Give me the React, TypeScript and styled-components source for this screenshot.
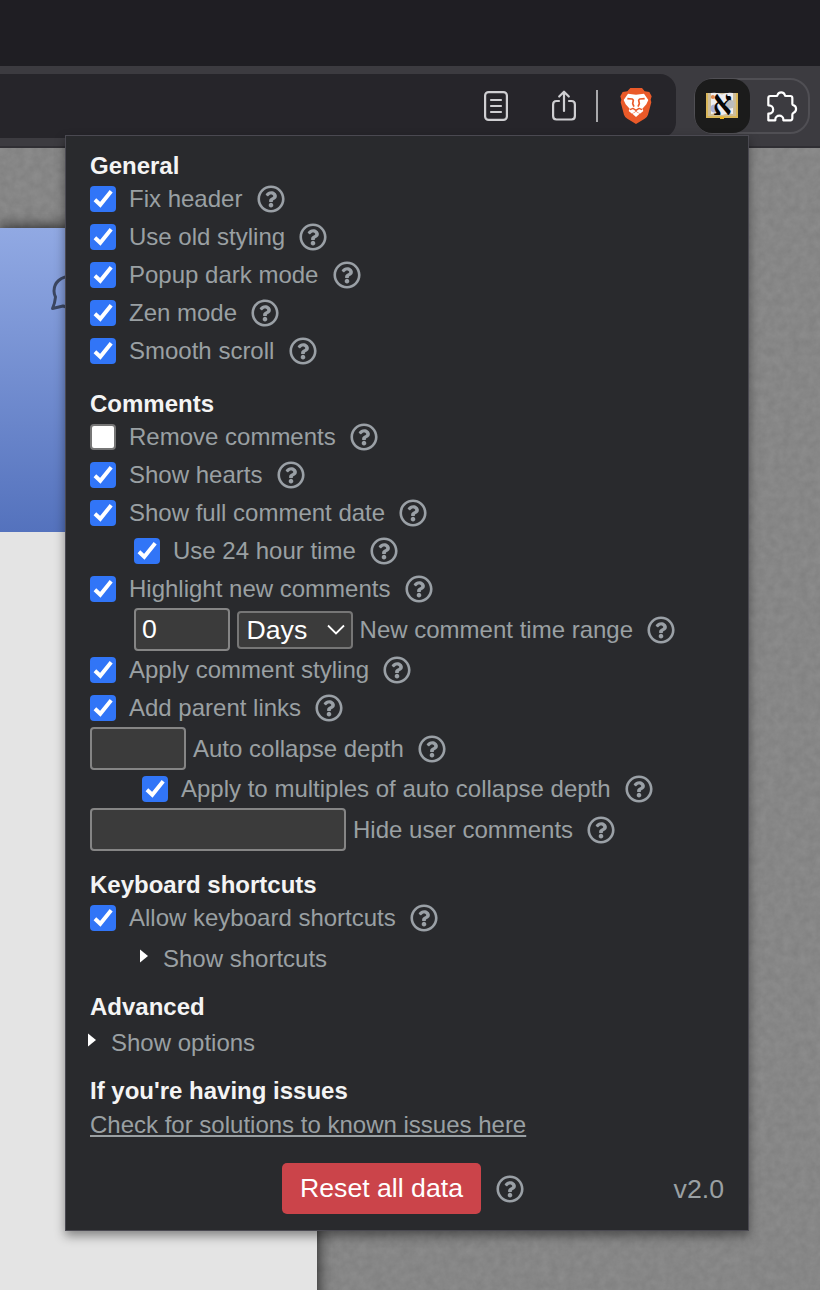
import React from "react";
import styled, { createGlobalStyle } from "styled-components";
import { FaRegQuestionCircle } from "react-icons/fa";

const GlobalStyle = createGlobalStyle`
  *, *::before, *::after { box-sizing: border-box; }
  body {
    margin: 0;
    overflow: hidden;
    font-family: "Liberation Sans", Arial, Helvetica, sans-serif;
    font-size: 24px;
  }
`;

const Browser = styled.div`
  position: relative;
  display: flex;
  flex-direction: column;
  width: 820px;
  height: 1290px;
  overflow: hidden;
`;

const TabStrip = styled.div`
  height: 66px;
  flex: none;
  background: #1f1e23;
`;

const Toolbar = styled.div`
  display: flex;
  align-items: flex-start;
  flex: none;
  height: 82px;
  padding-top: 8px;
  background: #3c3b40;
  border-bottom: 2px solid #302f34;
`;

const AddressBar = styled.div`
  display: flex;
  align-items: center;
  justify-content: flex-end;
  width: 676px;
  height: 64px;
  padding-right: 24px;
  border-radius: 0 16px 16px 0;
  background: #26252a;
`;

const Divider = styled.div`
  width: 2px;
  height: 32px;
  margin: 0 22px 0 20px;
  background: #a9a9ac;
`;

const ShareSlot = styled.div`
  display: flex;
  margin-left: 44px;
`;

const Extensions = styled.div`
  display: flex;
  width: 116px;
  height: 56px;
  margin: 4px 0 0 18px;
  border: 2px solid #504f54;
  border-radius: 20px;
`;

const ActiveExtension = styled.div`
  display: flex;
  align-items: center;
  justify-content: center;
  width: 55px;
  height: 54px;
  margin: -1px 0 0 -1px;
  padding-right: 2px;
  border-radius: 17px;
  background: #1b1b1b;
`;

const PuzzleSlot = styled.div`
  display: flex;
  align-items: center;
  padding-left: 15px;
`;

const Site = styled.div`
  position: relative;
  flex: 1;
  padding-top: 80px;
  background: #868686;
`;

const Texture = styled.svg`
  position: absolute;
  inset: 0;
  width: 100%;
  height: 100%;
`;

const Article = styled.div`
  position: relative;
  width: 317px;
  height: 1080px;
  background: #e4e4e4;
  box-shadow: 0 0 14px 1px rgba(0, 0, 0, 0.75);
`;

const Banner = styled.div`
  display: flex;
  align-items: flex-start;
  height: 304px;
  padding: 45px 0 0 48px;
  background: linear-gradient(#91a9e3, #5472bd);
`;

const Popup = styled.div`
  position: absolute;
  left: 65px;
  top: 135px;
  display: flex;
  flex-direction: column;
  width: 684px;
  height: 1096px;
  padding: 16px 24px;
  border: 1px solid #4a4951;
  background: #292a2d;
  color: #9aa0a3;
  box-shadow: 0 5px 10px rgba(0, 0, 0, 0.42);
`;

const Section = styled.section<{ $gap?: number }>`
  display: flex;
  flex-direction: column;
  margin-bottom: ${(p) => p.$gap ?? 20}px;
`;

const Heading = styled.h2`
  margin: 0;
  font-size: 24px;
  line-height: 28px;
  font-weight: 700;
  color: #f4f4f4;
`;

const Row = styled.div<{ $indent?: number; $tall?: boolean }>`
  display: flex;
  align-items: center;
  height: ${(p) => (p.$tall ? 43 : 38)}px;
  padding-left: ${(p) => p.$indent ?? 0}px;
  white-space: nowrap;
`;

const CheckLabel = styled.label`
  display: flex;
  align-items: center;
  gap: 13px;
`;

const Box = styled.span<{ $checked: boolean }>`
  display: flex;
  width: 26px;
  height: 26px;
  border-radius: 4px;
  background: ${(p) => (p.$checked ? "#3175f7" : "#ffffff")};
  border: ${(p) => (p.$checked ? "none" : "2px solid #767676")};
`;

const Help = styled(FaRegQuestionCircle)<{ $gap?: number }>`
  flex: none;
  width: 28px;
  height: 28px;
  margin-left: ${(p) => p.$gap ?? 14.2}px;
  color: #9aa0a6;
`;

const Field = styled.input<{ $width: number }>`
  width: ${(p) => p.$width}px;
  height: 43px;
  margin: 0 7px 0 0;
  padding: 0 6px;
  border: 2px solid #858585;
  border-radius: 4px;
  background: #3b3b3b;
  color: #fff;
  font: 26.67px "Liberation Sans", Arial, sans-serif;
  outline: none;
`;

const Select = styled.div`
  display: flex;
  align-items: center;
  justify-content: space-between;
  width: 116px;
  height: 38px;
  margin-right: 6.6px;
  padding: 0 6px 0 7.500px;
  border: 2px solid #767676;
  border-radius: 4px;
  background: #3b3b3b;
  color: #fff;
  font-size: 26.67px;
  line-height: 34px;
`;

const Disclosure = styled.div<{ $indent: number; $height: number }>`
  display: flex;
  align-items: center;
  gap: 15px;
  height: ${(p) => p.$height}px;
  margin-left: ${(p) => p.$indent}px;
`;

const Marker = styled.svg`
  width: 8px;
  height: 14px;
  margin-bottom: 5px;
  fill: #fff;
`;

const HelpLink = styled.a`
  align-self: flex-start;
  height: 40px;
  line-height: 40px;
  color: #9aa0a3;
  text-decoration: underline;
  text-decoration-thickness: 2px;
  text-underline-offset: 2px;
  text-decoration-skip-ink: none;
`;

const Footer = styled.div`
  display: flex;
  align-items: center;
  justify-content: space-between;
  margin-top: 18px;
  height: 51px;
  padding-left: 192px;
`;

const ResetGroup = styled.div`
  display: flex;
  align-items: center;
`;

const ResetButton = styled.button`
  width: 199px;
  height: 51px;
  padding: 0;
  border: none;
  border-radius: 5px;
  background: #cb444a;
  color: #fff;
  font: 26.67px "Liberation Sans", Arial, sans-serif;
`;

const Version = styled.span`
  padding-top: 2px;
  font-size: 26.67px;
`;

function Check({ label, checked = true, indent }: { label: string; checked?: boolean; indent?: number }) {
  return (
    <Row $indent={indent}>
      <CheckLabel>
        <Box $checked={checked}>
          {checked && (
            <svg width="26" height="26" viewBox="0 0 26 26" fill="none">
              <path d="M4.9 13.800 10.300 18.800 21.200 5.200" stroke="#fff" strokeWidth="3.900" />
            </svg>
          )}
        </Box>
        {label}
      </CheckLabel>
      <Help />
    </Row>
  );
}

function DisclosureRow({ label, indent, height }: { label: string; indent: number; height: number }) {
  return (
    <Disclosure $indent={indent} $height={height}>
      <Marker viewBox="0 0 8 14">
        <path d="M0 .5 8 7 0 13.500Z" />
      </Marker>
      {label}
    </Disclosure>
  );
}

const ReaderIcon = () => (
  <svg width="24" height="30" viewBox="0 0 24 30" fill="none" stroke="#cfcfd2" strokeWidth="2.2" strokeLinecap="round">
    <rect x="1.100" y="1.100" width="21.800" height="27.800" rx="3.500" />
    <path d="M7 9h10M7 15h10M7 21h10" />
  </svg>
);

const ShareIcon = () => (
  <svg width="24" height="32" viewBox="0 0 24 32" fill="none" stroke="#cfcfd2" strokeWidth="2.200" strokeLinecap="round" strokeLinejoin="round">
    <path d="M7 11H4.500Q1.100 11 1.100 14.500V26Q1.100 29.500 4.500 29.500H19.500Q22.900 29.500 22.900 26V14.500Q22.900 11 19.500 11H17" />
    <path d="M12 21V2M7.200 6.500 12 1.700l4.800 4.800" />
  </svg>
);

const BraveIcon = () => (
  <svg width="32" height="36" viewBox="0 0 96 108">
    <path fill="#ea5a29" d="M31 0H66L74 10 88 12 95 25 92 35 94 43 84 80Q82 87 74 92L48 108 22 92Q14 87 12 80L2 43 4 35 1 25 8 12 22 10Z" />
    <path fill="#fff" d="M24 17 48 20 72 17 85 36 79 49 67 62 70 69 60 77 48 69 36 77 26 69 29 62 17 49 11 36Z" />
    <path fill="#fff" d="M37 77 48 71 59 77 48 87Z" />
    <g fill="none" stroke="#ea5a29" strokeWidth="5" strokeLinejoin="round">
      <path d="M22 32 37 33 40 37 38 47 42 56" />
      <path d="M74 32 59 33 56 37 58 47 54 56" />
      <path d="M30 65 39 61 48 67 57 61 66 65" strokeWidth="4" />
    </g>
  </svg>
);

const BookIcon = () => (
  <svg width="32" height="28" viewBox="0 0 32 28" overflow="visible">
    <rect x="0" y="1" width="32" height="25" fill="#d9b65a" />
    <rect x="2" y="1" width="28" height="23" fill="#cdbd9b" />
    <path d="M5 1Q11 0 16 2.500 21 0 27 1V22Q22 20.500 16 23 10 20.500 5 22Z" fill="#eeedf0" />
    <circle cx="6.800" cy="5" r="2" fill="#e08a4e" />
    <circle cx="8.500" cy="16.500" r="4" fill="#aab0d6" />
    <circle cx="24" cy="12" r="4.500" fill="#bdbdbd" />
    <path d="M14 25h4v2h-4z" fill="#f0b41e" />
    <text
      transform="translate(16.300 23) scale(1.150 1.350)"
      textAnchor="middle"
      fontFamily="Liberation Serif, DejaVu Sans, serif"
      fontWeight="700"
      fontSize="26"
      fill="#060606"
    >
      א
    </text>
  </svg>
);

const PuzzleIcon = () => (
  <svg width="34" height="34" viewBox="914 87 102 102" fill="none" stroke="#fff" strokeWidth="6.600" strokeLinejoin="round">
    <path d="M930 108H948Q951 108 952 104A11 10 0 0 1 973 104Q974 108 977 108H990Q996 108 996 114V132Q996 135 1000 136A12 12 0 0 1 1000 158Q996 160 996 164V175Q996 181 990 181H969V178A12 11 0 0 0 945 178V181H924V161H926A12 12 0 0 0 926 136H924V114Q924 108 930 108Z" />
  </svg>
);

const CommentIcon = () => (
  <svg width="46" height="40" viewBox="0 0 46 40" fill="none" stroke="#3c4762" strokeWidth="3" strokeLinejoin="round">
    <path d="M25 3C12 3 6 10 6 18Q6 21 7.500 24Q7 30 4.500 35.500L15 33Q20 35 25 35C37 35 44 28 44 19S37 3 25 3Z" />
  </svg>
);

export default function App() {
  return (
    <Browser>
      <GlobalStyle />
      <TabStrip />
      <Toolbar>
        <AddressBar>
          <ReaderIcon />
          <ShareSlot>
            <ShareIcon />
          </ShareSlot>
          <Divider />
          <BraveIcon />
        </AddressBar>
        <Extensions>
          <ActiveExtension>
            <BookIcon />
          </ActiveExtension>
          <PuzzleSlot>
            <PuzzleIcon />
          </PuzzleSlot>
        </Extensions>
      </Toolbar>
      <Site>
        <Texture>
          <filter id="grain" x="0" y="0" width="100%" height="100%" colorInterpolationFilters="sRGB">
            <feTurbulence type="fractalNoise" baseFrequency="0.12" numOctaves="4" seed="4" />
            <feColorMatrix values="0.06 0 0 0 0.497  0.06 0 0 0 0.497  0.06 0 0 0 0.497  0 0 0 0 1" />
          </filter>
          <rect width="100%" height="100%" filter="url(#grain)" />
        </Texture>
        <Article>
          <Banner>
            <CommentIcon />
          </Banner>
        </Article>
      </Site>

      <Popup>
        <Section>
          <Heading>General</Heading>
          <Check label="Fix header" />
          <Check label="Use old styling" />
          <Check label="Popup dark mode" />
          <Check label="Zen mode" />
          <Check label="Smooth scroll" />
        </Section>

        <Section>
          <Heading>Comments</Heading>
          <Check label="Remove comments" checked={false} />
          <Check label="Show hearts" />
          <Check label="Show full comment date" />
          <Check label="Use 24 hour time" indent={44} />
          <Check label="Highlight new comments" />
          <Row $tall $indent={44}>
            <Field $width={96} defaultValue="0" />
            <Select>
              Days
              <svg width="18" height="12" viewBox="0 0 18 12" fill="none" stroke="#fff" strokeWidth="1.800">
                <path d="M1 1.500 9 9.500 17 1.500" />
              </svg>
            </Select>
            New comment time range
            <Help />
          </Row>
          <Check label="Apply comment styling" />
          <Check label="Add parent links" />
          <Row $tall>
            <Field $width={96} />
            Auto collapse depth
            <Help />
          </Row>
          <Check label="Apply to multiples of auto collapse depth" indent={52} />
          <Row $tall>
            <Field $width={256} />
            Hide user comments
            <Help />
          </Row>
        </Section>

        <Section $gap={13}>
          <Heading>Keyboard shortcuts</Heading>
          <Check label="Allow keyboard shortcuts" />
          <DisclosureRow label="Show shortcuts" indent={50} height={43} />
        </Section>

        <Section $gap={13}>
          <Heading>Advanced</Heading>
          <DisclosureRow label="Show options" indent={-2} height={43} />
        </Section>

        <Section $gap={0}>
          <Heading>If you're having issues</Heading>
          <HelpLink>Check for solutions to known issues here</HelpLink>
        </Section>

        <Footer>
          <ResetGroup>
            <ResetButton>Reset all data</ResetButton>
            <Help $gap={15} />
          </ResetGroup>
          <Version>v2.0</Version>
        </Footer>
      </Popup>
    </Browser>
  );
}
